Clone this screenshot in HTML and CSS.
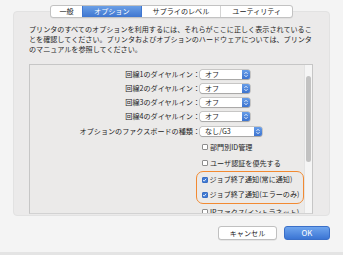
FILE: index.html
```html
<!DOCTYPE html>
<html lang="ja">
<head>
<meta charset="utf-8">
<title>オプション</title>
<link rel="stylesheet" href="styles.css">
</head>
<body>
<div class="window">
  <div class="tabs">
    <div class="tab-group">
      <span class="tab tab-short">一般</span>
      <span class="tab is-active">オプション</span>
      <span class="tab">サプライのレベル</span>
      <span class="tab">ユーティリティ</span>
    </div>
  </div>
  <div class="panel">
    <p class="desc">プリンタのすべてのオプションを利用するには、それらがここに正しく表示されているこ<br>とを確認してください。プリンタおよびオプションのハードウェアについては、プリンタ<br>のマニュアルを参照してください。</p>
    <div class="listbox">
      <div class="list">
        <div class="row">
          <span class="label">回線1のダイヤルイン：</span>
          <span class="popup"><span class="popup-value">オフ</span><span class="stepper"><svg viewBox="0 0 8 9" width="8" height="9"><path d="M2.5 3.8 L4 2.3 L5.5 3.8 M2.5 5.2 L4 6.7 L5.5 5.2" fill="none" stroke="#fff" stroke-width="0.9"/></svg></span></span>
        </div>
        <div class="row">
          <span class="label">回線2のダイヤルイン：</span>
          <span class="popup"><span class="popup-value">オフ</span><span class="stepper"><svg viewBox="0 0 8 9" width="8" height="9"><path d="M2.5 3.8 L4 2.3 L5.5 3.8 M2.5 5.2 L4 6.7 L5.5 5.2" fill="none" stroke="#fff" stroke-width="0.9"/></svg></span></span>
        </div>
        <div class="row">
          <span class="label">回線3のダイヤルイン：</span>
          <span class="popup"><span class="popup-value">オフ</span><span class="stepper"><svg viewBox="0 0 8 9" width="8" height="9"><path d="M2.5 3.8 L4 2.3 L5.5 3.8 M2.5 5.2 L4 6.7 L5.5 5.2" fill="none" stroke="#fff" stroke-width="0.9"/></svg></span></span>
        </div>
        <div class="row">
          <span class="label">回線4のダイヤルイン：</span>
          <span class="popup"><span class="popup-value">オフ</span><span class="stepper"><svg viewBox="0 0 8 9" width="8" height="9"><path d="M2.5 3.8 L4 2.3 L5.5 3.8 M2.5 5.2 L4 6.7 L5.5 5.2" fill="none" stroke="#fff" stroke-width="0.9"/></svg></span></span>
        </div>
        <div class="row">
          <span class="label">オプションのファクスボードの種類：</span>
          <span class="popup popup-wide"><span class="popup-value">なし/G3</span><span class="stepper"><svg viewBox="0 0 8 9" width="8" height="9"><path d="M2.5 3.8 L4 2.3 L5.5 3.8 M2.5 5.2 L4 6.7 L5.5 5.2" fill="none" stroke="#fff" stroke-width="0.9"/></svg></span></span>
        </div>
        <div class="checks">
          <div class="check"><span class="box"></span><span>部門別ID管理</span></div>
          <div class="check"><span class="box"></span><span>ユーザ認証を優先する</span></div>
          <div class="highlight">
            <div class="check check-tight"><span class="box is-checked"><svg viewBox="0 0 6 6" width="6" height="6"><path d="M1.3 3.1 L2.5 4.3 L4.8 1.6" fill="none" stroke="#fff" stroke-width="1"/></svg></span><span>ジョブ終了通知(常に通知)</span></div>
            <div class="check check-tight"><span class="box is-checked"><svg viewBox="0 0 6 6" width="6" height="6"><path d="M1.3 3.1 L2.5 4.3 L4.8 1.6" fill="none" stroke="#fff" stroke-width="1"/></svg></span><span>ジョブ終了通知(エラーのみ)</span></div>
          </div>
          <div class="check"><span class="box"></span><span>IPファクス(イントラネット)</span></div>
        </div>
      </div>
      <div class="scroll"><div class="thumb"></div></div>
    </div>
  </div>
  <div class="buttons">
    <button class="btn btn-cancel">キャンセル</button>
    <button class="btn btn-primary">OK</button>
  </div>
  <div class="bottom-edge"></div>
</div>
</body>
</html>
```

FILE: styles.css
```css
* { box-sizing: border-box; }

html, body {
  margin: 0;
  padding: 0;
}

body {
  width: 343px;
  height: 255px;
  overflow: hidden;
  background: #f4f4f4;
  font-family: "Noto Sans CJK JP", "Noto Sans", sans-serif;
  font-size: 7.1px;
  color: #242424;
}

.window {
  height: 255px;
  display: flex;
  flex-direction: column;
}

/* segmented tabs */
.tabs {
  display: flex;
  justify-content: center;
  padding-top: 5px;
  position: relative;
  z-index: 1;
  flex: none;
}

.tab-group {
  display: flex;
  height: 13px;
  border: 1px solid #c2c2c2;
  border-radius: 3px;
  background: #ffffff;
  overflow: hidden;
  box-shadow: 0 0.5px 0.5px rgba(0, 0, 0, 0.08);
}

.tab {
  padding: 0 11px;
  line-height: 11px;
  color: #222;
  border-left: 1px solid #d4d4d4;
  white-space: nowrap;
}

.tab:first-child { border-left: none; }

.tab-short { padding: 0 8.5px; }

.tab.is-active {
  background: linear-gradient(#6a9fe6, #3f76d0);
  color: #ffffff;
  border-left-color: #3f76d0;
}

.tab.is-active + .tab { border-left-color: #3f76d0; }

/* panel */
.panel {
  flex: none;
  margin: -7px 13px 0;
  height: 205px;
  background: #ebeaea;
  border-radius: 4px;
  border: 1px solid #e2e2e2;
  padding: 12px 0 0 15px;
}

.desc {
  margin: 0;
  line-height: 10px;
  white-space: nowrap;
  color: #262626;
}

.listbox {
  margin-top: 10px;
  width: 284px;
  height: 150px;
  border: 1px solid #c6c6c6;
  border-bottom-color: #d2d2d2;
  background: #ebeae9;
  display: flex;
  overflow: hidden;
}

.list {
  flex: 1;
  padding-top: 2px;
  display: block;
}

.row {
  display: grid;
  grid-template-columns: 170px auto;
  align-items: center;
  height: 14.25px;
}

.label {
  text-align: right;
  white-space: nowrap;
  line-height: 9px;
}

.popup {
  display: flex;
  width: 50px;
  height: 9px;
  background: #ffffff;
  border-radius: 2px;
  box-shadow: 0 0 0 0.5px rgba(0, 0, 0, 0.28), 0 0.5px 1px rgba(0, 0, 0, 0.18);
}

.popup-wide { width: 62px; }

.popup-value {
  flex: 1;
  padding-left: 5px;
  line-height: 9px;
  white-space: nowrap;
  color: #1e1e1e;
}

.stepper {
  width: 8px;
  height: 9px;
  background: linear-gradient(#679de8, #3c73cf);
  border-radius: 0 2px 2px 0;
  display: flex;
}

/* checkboxes */
.checks {
  margin-top: 1px;
  padding-left: 170px;
}

.check {
  display: flex;
  align-items: center;
  gap: 2px;
  height: 16px;
  padding-left: 2px;
  white-space: nowrap;
  line-height: 9px;
}

.check-tight { height: 15px; }

.box {
  width: 6px;
  height: 6px;
  flex: none;
  background: #ffffff;
  border: 0.6px solid #8e8e8e;
  border-radius: 1px;
  display: flex;
}

.box.is-checked {
  background: #3f7ad5;
  border-color: #3a6fc4;
}

.box svg { margin: -0.6px; }

.highlight {
  margin-left: -4px;
  width: 108px;
  height: 33px;
  border: 1.5px solid #f28a32;
  border-radius: 7px;
  padding-left: 2.5px;
}

/* scrollbar */
.scroll {
  width: 8px;
  flex: none;
  background: #f5f5f5;
  border-left: 1px solid #e3e3e3;
}

.thumb {
  width: 5px;
  height: 86px;
  margin: 11px 0 0 1px;
  background: #c2c2c2;
  border-radius: 3px;
}

/* buttons */
.buttons {
  flex: none;
  display: flex;
  justify-content: flex-end;
  gap: 7px;
  margin-top: 10px;
  padding-right: 13px;
}

.btn {
  height: 14px;
  margin: 0;
  padding: 0;
  font-family: inherit;
  font-size: 7.1px;
  line-height: 12px;
  border-radius: 3px;
  cursor: default;
}

.btn-cancel {
  width: 59px;
  background: #ffffff;
  color: #222;
  border: 0.6px solid #c0c0c0;
  box-shadow: 0 0.5px 0.5px rgba(0, 0, 0, 0.12);
}

.btn-primary {
  width: 46px;
  background: linear-gradient(#6fa5ee, #3b75d4);
  color: #ffffff;
  border: 0.6px solid #3a6fc8;
  font-size: 7.8px;
}

.bottom-edge {
  flex: none;
  margin-top: 12px;
  height: 3px;
  background: #e4e4e4;
}
```
